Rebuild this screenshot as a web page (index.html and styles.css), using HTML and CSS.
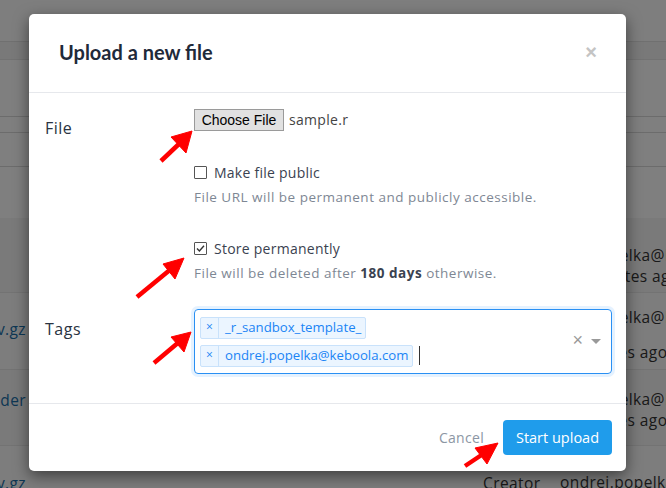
FILE: index.html
```html
<!DOCTYPE html>
<html>
<head>
<meta charset="utf-8">
<title>Upload a new file</title>
<link rel="stylesheet" href="styles.css">
</head>
<body>
<div class="page">
  <div class="band b1"></div>
  <div class="band b2"></div>
  <div class="band b3"></div>
  <div class="band b4"></div>
  <div class="band b5"></div>
  <div class="band b6"></div>
  <div class="row r1">
    <div class="cell-left"></div>
    <div class="cell-creator"></div>
    <div class="cell-right"><div class="who">ondrej.popelka@keboola.com</div><div class="when-late">18 minutes ago</div></div>
  </div>
  <div class="row r2">
    <div class="cell-left"><span class="link">in.c-main.csv.gz</span></div>
    <div class="cell-creator"></div>
    <div class="cell-right"><div class="who">ondrej.popelka@keboola.com</div><div class="lower">2 minutes ago</div></div>
  </div>
  <div class="row r3">
    <div class="cell-left"><span class="link">file-header</span></div>
    <div class="cell-creator"></div>
    <div class="cell-right"><div class="who">ondrej.popelka@keboola.com</div><div>5 minutes ago</div></div>
  </div>
  <div class="row r4">
    <div class="cell-left"><span class="link">table.csv.gz</span></div>
    <div class="cell-creator">Creator</div>
    <div class="cell-right"><div>ondrej.popelka@keboola.com</div></div>
  </div>
</div>
<div class="backdrop"></div>

<div class="modal">
  <div class="modal-header">
    <h4 class="modal-title">Upload a new file</h4>
    <span class="close">×</span>
  </div>
  <div class="modal-body">
    <div class="form-row">
      <div class="label lbl-file">File</div>
      <div class="control">
        <div class="file-input">
          <span class="file-btn">Choose File</span>
          <span class="file-name">sample.r</span>
        </div>
        <div class="check-group first">
          <label class="check"><span class="box"></span>Make file public</label>
          <p class="help">File URL will be permanent and publicly accessible.</p>
        </div>
        <div class="check-group second">
          <label class="check"><span class="box checked"><svg viewBox="0 0 13 13" width="13" height="13"><path d="M3 6.6 L5.4 9 L10 3.8" fill="none" stroke="#333" stroke-width="1.4"/></svg></span>Store permanently</label>
          <p class="help">File will be deleted after <b>180 days</b> otherwise.</p>
        </div>
      </div>
    </div>
    <div class="form-row tags-row">
      <div class="label lbl-tags">Tags</div>
      <div class="control">
        <div class="select">
          <div class="values">
            <div class="tag"><span class="tag-x">×</span><span class="tag-label">_r_sandbox_template_</span></div>
            <div class="tag-line">
              <div class="tag"><span class="tag-x">×</span><span class="tag-label">ondrej.popelka@keboola.com</span></div>
              <span class="caret-cursor"></span>
            </div>
          </div>
          <span class="clear">×</span>
          <span class="arrow-down"></span>
        </div>
      </div>
    </div>
  </div>
  <div class="modal-footer">
    <span class="cancel">Cancel</span>
    <span class="btn-primary">Start upload</span>
  </div>
</div>

<svg class="arrows" width="666" height="488" viewBox="0 0 666 488">
  <g fill="#ff0000" stroke="#ff0000">
    <line x1="161" y1="161" x2="180" y2="143" stroke-width="4.5"/>
    <polygon points="192,131 171,137 186,153" stroke-width="1"/>
    <line x1="137" y1="297" x2="171" y2="269" stroke-width="4.5"/>
    <polygon points="184,258 163,264 175,279" stroke-width="1"/>
    <line x1="154" y1="363" x2="179" y2="342" stroke-width="4.5"/>
    <polygon points="191,332 171,337 184,352" stroke-width="1"/>
    <line x1="465" y1="466" x2="483" y2="454" stroke-width="4.5"/>
    <polygon points="498,443 475,448 487,464" stroke-width="1"/>
  </g>
</svg>
</body>
</html>
```

FILE: styles.css
```css
* { box-sizing: border-box; }
html, body { margin: 0; padding: 0; }
body {
  width: 666px;
  height: 488px;
  overflow: hidden;
  position: relative;
  background: #fff;
  font-family: "Open Sans", "DejaVu Sans", sans-serif;
}

/* underlying page */
.page { display: flex; flex-direction: column; width: 666px; overflow: hidden; }
.band { border-bottom: 1px solid #ddd; }
.b1 { height: 42px; background: #fdfdfd; border-bottom-color: #e0e0e0; }
.b2 { height: 18px; background: #f2f2f2; border-bottom-color: #e4e4e4; }
.b3 { height: 57px; background: #fff; border-bottom-color: #d8d8d8; }
.b4 { height: 16px; background: #fff; border-bottom-color: #d8d8d8; }
.b5 { height: 34px; background: #fff; border-bottom-color: #d8d8d8; }
.b6 { height: 51px; background: #fff; border-bottom: none; }
.row {
  display: flex;
  width: 666px;
  overflow: hidden;
  background: #f5f5f5;
  border-bottom: 1px solid #e6e6e6;
  font-size: 15.5px;
  letter-spacing: 0.4px;
  color: #333;
}
.r1 { height: 75px; padding-top: 27px; }
.r2 { height: 77px; padding-top: 14px; background: #fafafa; }
.r3 { height: 76px; padding-top: 19px; }
.r4 { height: 60px; padding-top: 26px; background: #fafafa; }
.cell-left {
  width: 26px;
  flex-shrink: 0;
  display: flex;
  justify-content: flex-end;
  overflow: hidden;
  white-space: nowrap;
}
.r2 .cell-left { padding-top: 11px; }
.link { color: #1a6ea8; }
.cell-creator { width: 534px; flex-shrink: 0; padding-left: 457px; white-space: nowrap; }
.cell-right { flex-shrink: 0; white-space: nowrap; line-height: 21px; }
.cell-right .who { margin-left: -24px; }
.cell-right .when-late { margin-left: 3px; }
.r2 .cell-right .lower { margin-top: 14px; }

.backdrop {
  position: absolute;
  inset: 0;
  background: rgba(0, 0, 0, 0.5);
}

/* modal */
.modal {
  position: absolute;
  left: 29px;
  top: 14px;
  width: 597px;
  height: 457px;
  background: #fff;
  border-radius: 5px;
  box-shadow: 0 5px 15px rgba(0, 0, 0, 0.5);
  display: flex;
  flex-direction: column;
}
.modal-header {
  height: 79px;
  border-bottom: 1px solid #e6e8ec;
  display: flex;
  align-items: center;
  justify-content: space-between;
  padding: 0 29px 0 30px;
}
.modal-title {
  margin: 0;
  font-family: "Lato", sans-serif;
  font-weight: 700;
  font-size: 20px;
  color: #1f2a3a;
  padding-bottom: 2px;
}
.close {
  font-family: "Liberation Sans", sans-serif;
  font-weight: 700;
  font-size: 20px;
  color: #c4c4c4;
  padding-bottom: 2px;
}

.modal-body {
  height: 311px;
  border-bottom: 1px solid #e6e8ec;
  padding: 16px 14px 0 16px;
}
.form-row { display: flex; }
.label {
  width: 149px;
  font-size: 16px;
  letter-spacing: 0.5px;
  color: #2a3342;
}
.lbl-file { padding-top: 8px; }
.control { flex: 1; }

.file-input { display: flex; align-items: center; height: 22px; }
.file-btn {
  font-family: "Liberation Sans", Arial, sans-serif;
  font-size: 14px;
  color: #000;
  background: #e1e1e1;
  border: 1px solid #9a9a9a;
  height: 22px;
  width: 90px;
  display: flex;
  align-items: center;
  justify-content: center;
}
.file-name {
  margin-left: 5px;
  font-size: 14px;
  letter-spacing: 0.3px;
  color: #444;
  padding-bottom: 2px;
}

.check-group.first { margin-top: 31px; }
.check-group.second { margin-top: 32px; }
.check {
  display: flex;
  align-items: center;
  font-size: 14px;
  letter-spacing: 0.25px;
  color: #3a4250;
  height: 20px;
}
.box {
  width: 13px;
  height: 13px;
  border: 1px solid #555;
  border-radius: 1px;
  margin-right: 7px;
  display: inline-flex;
  position: relative;
  background: #fff;
}
.box svg { position: absolute; left: -1px; top: -1px; }
.help {
  margin: 6px 0 0 0;
  font-size: 13.5px;
  letter-spacing: 0.5px;
  color: #7e8794;
  line-height: 18px;
}
.help b { color: #3a4250; font-weight: 700; }

.tags-row { margin-top: 27px; }
.lbl-tags { padding-top: 9px; }
.select {
  height: 65px;
  border: 1px solid #2a90f3;
  border-radius: 4px;
  box-shadow: 0 0 0 3px rgba(0, 126, 255, 0.1);
  display: flex;
  align-items: center;
  padding: 0 10px 0 5px;
}
.values {
  flex: 1;
  display: flex;
  flex-direction: column;
  gap: 6px;
}
.tag-line { display: flex; align-items: center; }
.tag {
  display: inline-flex;
  align-self: flex-start;
  height: 22px;
  background: #ebf5ff;
  border: 1px solid #c9e2fb;
  border-radius: 2px;
  color: #1a84f5;
  font-size: 13.2px;
  align-items: stretch;
}
.tag-x {
  width: 18px;
  border-right: 1px solid #c9e2fb;
  display: flex;
  align-items: center;
  justify-content: center;
  font-size: 12px;
  padding-bottom: 2px;
}
.tag-label {
  padding: 0 4px 0 6px;
  display: flex;
  align-items: center;
  padding-bottom: 1px;
}
.caret-cursor {
  width: 1px;
  height: 19px;
  background: #333;
  margin-left: 6px;
}
.clear {
  font-family: "Liberation Sans", sans-serif;
  font-size: 18px;
  color: #999;
  margin-right: 8px;
  padding-bottom: 3px;
}
.arrow-down {
  width: 0;
  height: 0;
  border-left: 5px solid transparent;
  border-right: 5px solid transparent;
  border-top: 5px solid #999;
}

.modal-footer {
  flex: 1;
  display: flex;
  align-items: center;
  justify-content: flex-end;
  padding: 0 14px 0 0;
}
.cancel {
  font-size: 14px;
  letter-spacing: 0.3px;
  color: #8c96a4;
  margin-right: 19px;
}
.btn-primary {
  background: #1f9ceb;
  color: #fff;
  font-size: 14.5px;
  border-radius: 4px;
  width: 109px;
  height: 35px;
  display: flex;
  align-items: center;
  justify-content: center;
  padding-bottom: 1px;
}

.arrows {
  position: absolute;
  left: 0;
  top: 0;
}
```
